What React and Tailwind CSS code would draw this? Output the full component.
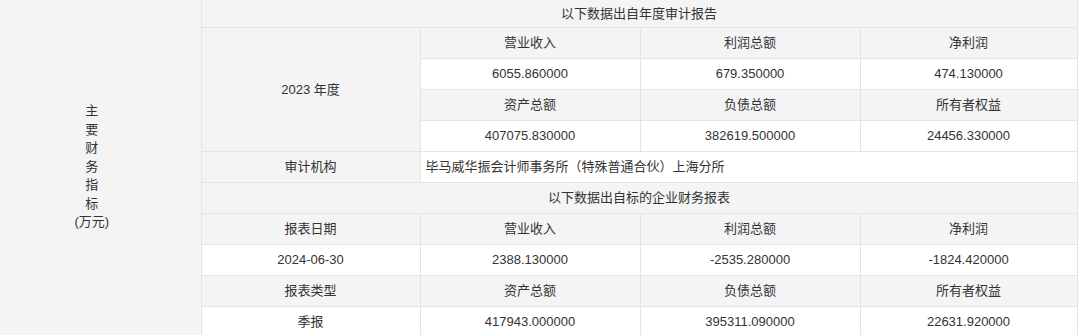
import React from 'react';

const font = { fontFamily: '"Liberation Sans", "Noto Sans CJK SC", sans-serif' };

function Cell({ children, white, span, rows, left, className = '' }) {
  return (
    <td
      colSpan={span}
      rowSpan={rows}
      className={`border border-[#e4e4e4] text-[13px] text-[#333] ${white ? 'bg-white' : 'bg-[#f4f4f4]'} ${left ? 'text-left pl-[5px]' : 'text-center'} ${className}`}
    >
      {children}
    </td>
  );
}

export default function App() {
  const label = ['主', '要', '财', '务', '指', '标', '(万元)'];
  return (
    <div className="bg-white w-[1080px] h-[335px] overflow-hidden" style={font}>
      <table className="border-collapse table-fixed w-[1077px] -mt-px">
        <colgroup>
          <col className="w-[201px]" />
          <col className="w-[219px]" />
          <col className="w-[220px]" />
          <col className="w-[220px]" />
          <col className="w-[217px]" />
        </colgroup>
        <tbody>
          <tr className="h-[28px]">
            <Cell rows={11} className="border-l-0 leading-[18.6px] pr-[17px] pb-[3px]">
              {label.map((c) => (
                <div key={c}>{c}</div>
              ))}
            </Cell>
            <Cell span={4}>以下数据出自年度审计报告</Cell>
          </tr>
          <tr className="h-[31px]">
            <Cell rows={4}>2023 年度</Cell>
            <Cell>营业收入</Cell>
            <Cell>利润总额</Cell>
            <Cell>净利润</Cell>
          </tr>
          <tr className="h-[31px]">
            <Cell white>6055.860000</Cell>
            <Cell white>679.350000</Cell>
            <Cell white>474.130000</Cell>
          </tr>
          <tr className="h-[31px]">
            <Cell>资产总额</Cell>
            <Cell>负债总额</Cell>
            <Cell>所有者权益</Cell>
          </tr>
          <tr className="h-[31px]">
            <Cell white>407075.830000</Cell>
            <Cell white>382619.500000</Cell>
            <Cell white>24456.330000</Cell>
          </tr>
          <tr className="h-[31px]">
            <Cell>审计机构</Cell>
            <Cell white span={3} left>毕马威华振会计师事务所（特殊普通合伙）上海分所</Cell>
          </tr>
          <tr className="h-[31px]">
            <Cell span={4}>以下数据出自标的企业财务报表</Cell>
          </tr>
          <tr className="h-[31px]">
            <Cell>报表日期</Cell>
            <Cell>营业收入</Cell>
            <Cell>利润总额</Cell>
            <Cell>净利润</Cell>
          </tr>
          <tr className="h-[31px]">
            <Cell white>2024-06-30</Cell>
            <Cell white>2388.130000</Cell>
            <Cell white>-2535.280000</Cell>
            <Cell white>-1824.420000</Cell>
          </tr>
          <tr className="h-[31px]">
            <Cell>报表类型</Cell>
            <Cell>资产总额</Cell>
            <Cell>负债总额</Cell>
            <Cell>所有者权益</Cell>
          </tr>
          <tr className="h-[31px]">
            <Cell white>季报</Cell>
            <Cell white>417943.000000</Cell>
            <Cell white>395311.090000</Cell>
            <Cell white>22631.920000</Cell>
          </tr>
        </tbody>
      </table>
    </div>
  );
}
